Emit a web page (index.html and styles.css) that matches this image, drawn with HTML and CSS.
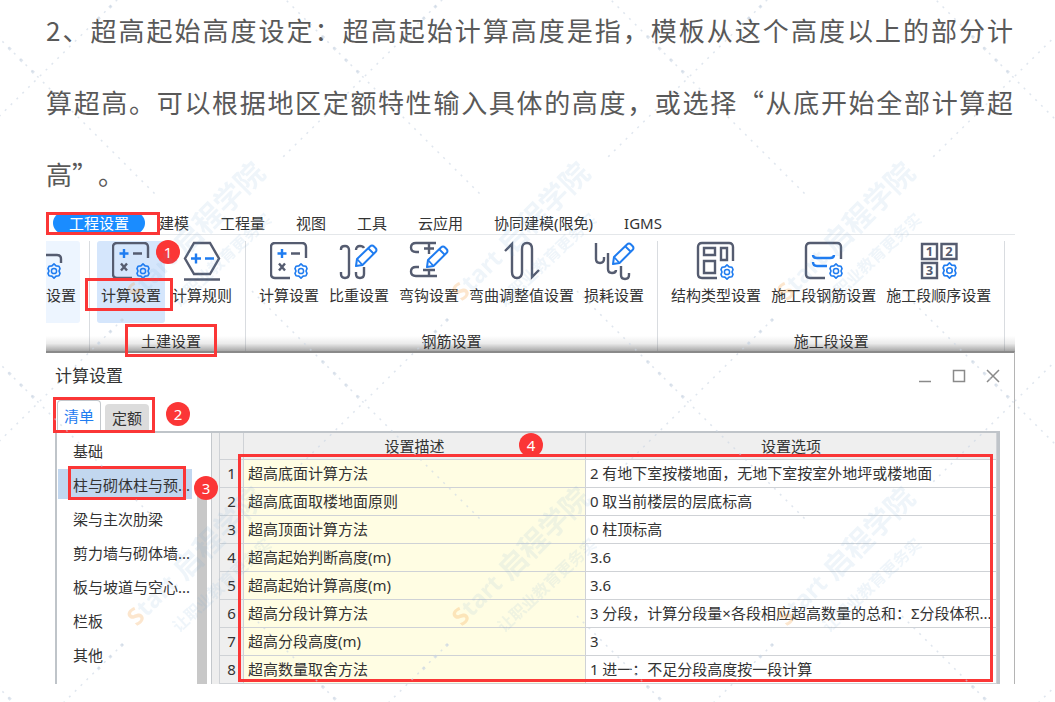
FILE: index.html
```html
<!DOCTYPE html>
<html lang="zh-CN">
<head>
<meta charset="utf-8">
<title>超高起始高度设定</title>
<link rel="stylesheet" href="styles.css">
</head>
<body>
<svg class="sprite" aria-hidden="true">
  <defs>
    <symbol id="gear" viewBox="0 0 16 16">
      <path d="M8 .9l2.1 2 2.9.3 1 2.4-1 2.4 1 2.4-1 2.4-2.9.3-2.1 2-2.1-2-2.9-.3-1-2.4 1-2.4-1-2.4 1-2.4 2.9-.3z" fill="none" stroke="#1f7cf0" stroke-width="1.6" stroke-linejoin="round"/>
      <circle cx="8" cy="8" r="2.6" fill="none" stroke="#1f7cf0" stroke-width="1.5"/>
    </symbol>
    <symbol id="pencil" viewBox="0 0 24 24">
      <path d="M2 22l1-7L16 2.500q2-2 4 0l1.500 1.500q2 2 0 4L8.500 21z" fill="#fff" stroke="#1f7cf0" stroke-width="2" stroke-linejoin="round"/>
      <path d="M14.500 4.500l5 5M3 15l5.500 6" fill="none" stroke="#1f7cf0" stroke-width="1.800"/>
    </symbol>
    <symbol id="calc" viewBox="0 0 38 38">
      <path class="ink" d="M36 16V5q0-4-4-4H5Q1 1 1 5v27q0 4 4 4h15"/>
      <path class="blue" d="M12 7v9M7.500 11.500h9"/>
      <path class="ink" d="M21 11.500h9M9 21.500l6 7M15 21.500l-6 7"/>
      <use href="#gear" x="23" y="21" width="16" height="16"/>
    </symbol>
  </defs>
</svg>

<main class="page">
  <p class="lead">
    <span class="line">2、超高起始高度设定：超高起始计算高度是指，模板从这个高度以上的部分计</span>
    <span class="line">算超高。可以根据地区定额特性输入具体的高度，或选择“从底开始全部计算超</span>
    <span class="line last">高”。</span>
  </p>

  <section class="shot">
    <nav class="menu">
      <a class="current" href="#">工程设置<span class="mark mark-menu"></span></a>
      <a href="#">建模</a>
      <a href="#">工程量</a>
      <a href="#">视图</a>
      <a href="#">工具</a>
      <a href="#">云应用</a>
      <a href="#">协同建模(限免)</a>
      <a href="#">IGMS</a>
    </nav>

    <div class="ribbon">
      <div class="cut">
        <button class="tool" type="button">
          <svg width="38" height="38" viewBox="0 0 38 38"><path class="ink" d="M0 13h11q4 0 4 4v4"/><use href="#gear" x="0" y="21" width="16" height="16"/></svg>
          设置
        </button>
      </div>

      <div class="group group-civil">
        <div class="tools">
          <button class="tool chosen" type="button">
            <svg width="38" height="38"><use href="#calc"/></svg>
            计算设置
            <span class="mark mark-tool"></span>
            <span class="badge badge-tool">1</span>
          </button>
          <button class="tool" type="button">
            <svg width="38" height="38" viewBox="0 0 38 38"><path class="ink" d="M11 1h16l9 15.500L27 32H11L2 16.500zM1 37.500h36"/><path class="blue" d="M13 11.500v10M8 16.500h10M22 16.500h9"/></svg>
            计算规则
          </button>
        </div>
        <div class="caption"><span class="caption-text">土建设置<span class="mark mark-caption"></span></span></div>
      </div>

      <div class="group">
        <div class="tools">
          <button class="tool" type="button">
            <svg width="38" height="38"><use href="#calc"/></svg>
            计算设置
          </button>
          <button class="tool" type="button">
            <svg width="38" height="38" viewBox="0 0 38 38"><path class="ink" d="M1 8V7q0-3 4-3t4 4v24q0 4-4 4t-4-4v-2M16 8q0-4 4-4 3 0 4 2M16 30v2q0 4 4 4t4-4V25"/><use href="#pencil" x="14" y="2" width="24" height="24"/></svg>
            比重设置
          </button>
          <button class="tool" type="button">
            <svg width="38" height="38" viewBox="0 0 38 38"><path class="ink" d="M26 1H6Q1 1 1 5.500T6 10h3M19 1v11M14 6.500h10M9 25H6q-5 0-5 4.500T6 34h21M13 28h12M19 28v6"/><use href="#pencil" x="15" y="3" width="24" height="24"/></svg>
            弯钩设置
          </button>
          <button class="tool" type="button">
            <svg width="38" height="38" viewBox="0 0 38 38"><path class="ink" d="M2 9l7-7v28q0 6 5 6t5-6V7q0-6 5-6t5 6v28l7-7"/></svg>
            弯曲调整值设置
          </button>
          <button class="tool" type="button">
            <svg width="40" height="38" viewBox="0 0 40 38"><path class="ink" d="M2 1v16q0 4 4 4t4-4v-2M14 11v16q0 4 4 4t4-3M27 24v9q0 4 4 4t4-4v-2"/><use href="#pencil" x="17" y="0" width="24" height="24"/></svg>
            损耗设置
          </button>
        </div>
        <div class="caption">钢筋设置</div>
      </div>

      <div class="group">
        <div class="tools">
          <button class="tool" type="button">
            <svg width="38" height="38" viewBox="0 0 38 38"><path class="ink" d="M36 19V5q0-4-4-4H5Q1 1 1 5v27q0 4 4 4h15"/><path class="ink" d="M7 6h11v7H7zM24 6h6v12h-6zM7 19h11v12H7z"/><use href="#gear" x="22" y="22" width="16" height="16"/></svg>
            结构类型设置
          </button>
          <button class="tool" type="button">
            <svg width="38" height="38" viewBox="0 0 38 38"><path class="ink" d="M36 17V5q0-4-4-4H5Q1 1 1 5v27q0 4 4 4h15"/><path class="blue" d="M8 13q0 3 4 3h13q4 0 4-3M8 20q0 4 4 4h10"/><use href="#gear" x="23" y="21" width="16" height="16"/></svg>
            施工段钢筋设置
          </button>
          <button class="tool" type="button">
            <svg width="38" height="38" viewBox="0 0 38 38"><path class="ink" d="M2 2h15v15H2zM21.500 2h15v15h-15zM2 21h15v15H2z"/><g class="digit"><text x="9.500" y="14">1</text><text x="29" y="14">2</text><text x="9.500" y="33">3</text></g><use href="#gear" x="21" y="20" width="17" height="17"/></svg>
            施工段顺序设置
          </button>
        </div>
        <div class="caption">施工段设置</div>
      </div>
    </div>

    <div class="dialog">
      <header class="titlebar">
        <h1 class="title">计算设置</h1>
        <div class="window-buttons">
          <button type="button" aria-label="最小化"><svg width="14" height="14" viewBox="0 0 14 14"><path d="M1 12.500h12"/></svg></button>
          <button type="button" aria-label="最大化"><svg width="14" height="14" viewBox="0 0 14 14"><path d="M1.500 1.500h11v11h-11z"/></svg></button>
          <button type="button" aria-label="关闭"><svg width="14" height="14" viewBox="0 0 14 14"><path d="M1 1l12 12M13 1L1 13"/></svg></button>
        </div>
      </header>

      <div class="tabs">
        <button class="tab open" type="button">清单</button>
        <button class="tab" type="button">定额</button>
        <span class="mark mark-tabs"></span>
        <span class="badge badge-tabs">2</span>
      </div>

      <div class="panel">
        <div class="side">
          <ul class="list">
            <li>基础</li>
            <li class="selected">柱与砌体柱与预...<span class="mark mark-item"></span><span class="badge badge-item">3</span></li>
            <li>梁与主次肋梁</li>
            <li>剪力墙与砌体墙...</li>
            <li>板与坡道与空心...</li>
            <li>栏板</li>
            <li>其他</li>
          </ul>
          <div class="scroll"></div>
        </div>
        <div class="grid">
          <table>
            <colgroup><col class="col-num"><col class="col-name"><col></colgroup>
            <thead>
              <tr><th></th><th>设置描述</th><th>设置选项</th></tr>
            </thead>
            <tbody>
              <tr><th>1</th><td>超高底面计算方法</td><td>2 有地下室按楼地面，无地下室按室外地坪或楼地面</td></tr>
              <tr><th>2</th><td>超高底面取楼地面原则</td><td>0 取当前楼层的层底标高</td></tr>
              <tr><th>3</th><td>超高顶面计算方法</td><td>0 柱顶标高</td></tr>
              <tr><th>4</th><td>超高起始判断高度(m)</td><td>3.6</td></tr>
              <tr><th>5</th><td>超高起始计算高度(m)</td><td>3.6</td></tr>
              <tr><th>6</th><td>超高分段计算方法</td><td>3 分段，计算分段量×各段相应超高数量的总和：Σ分段体积...</td></tr>
              <tr><th>7</th><td>超高分段高度(m)</td><td>3</td></tr>
              <tr><th>8</th><td>超高数量取舍方法</td><td>1 进一：不足分段高度按一段计算</td></tr>
            </tbody>
          </table>
          <span class="badge badge-grid">4</span>
          <span class="mark mark-grid"></span>
        </div>
      </div>
    </div>
  </section>

  <svg class="watermark" aria-hidden="true">
    <defs>
      <pattern id="dots" x="527" y="566" width="325" height="325" patternUnits="userSpaceOnUse">
        <g fill="none" stroke="#c9d5e2" stroke-opacity=".6">
          <path d="M50 50L280 280M246 78L80 242" stroke-width="1.500" stroke-dasharray="2 6.200"/>
          <path d="M120 120l42 42M246 78l-34 34" stroke-width="3" stroke-dasharray="3 13.400"/>
        </g>
      </pattern>
      <pattern id="brand" x="440" y="475" width="325" height="325" patternUnits="userSpaceOnUse">
        <g transform="translate(22 152) rotate(-45)" fill="#5f9bd0" fill-opacity=".1">
          <text class="wm-latin" x="0" y="0"><tspan fill="#f59a3c" fill-opacity=".25">S</tspan>tart</text>
          <text class="wm-name" x="66" y="2">启程学院</text>
        </g>
        <text class="wm-motto" transform="translate(64 158) rotate(-43)" fill="#5f9bd0" fill-opacity=".1">让职业教育更务实</text>
      </pattern>
    </defs>
    <rect width="100%" height="100%" fill="url(#dots)"/>
    <rect width="100%" height="100%" fill="url(#brand)"/>
  </svg>
</main>
</body>
</html>
```

FILE: styles.css
```css
* {
  box-sizing: border-box;
}

body {
  margin: 0;
  background: #fff;
  color: #333;
  font: 15px/20px "Noto Sans", "Noto Sans CJK SC", sans-serif;
}

button {
  border: 0;
  padding: 0;
  background: none;
  color: inherit;
  font: inherit;
}

a {
  color: inherit;
  text-decoration: none;
}

.sprite {
  position: absolute;
  width: 0;
  height: 0;
}

.page {
  position: relative;
  display: flow-root;
  min-height: 100vh;
  padding: 0 40px 0 46px;
  overflow: hidden;
}

/* Article text */
.lead {
  margin: -6px 2px 2px 0;
  color: #595959;
  font-family: "Noto Sans CJK SC", sans-serif;
  font-size: 26px;
  line-height: 72px;
  text-spacing-trim: space-all;
}

.line {
  display: block;
  text-align: justify;
  text-align-last: justify;
  white-space: nowrap;
}

.last {
  text-align-last: left;
}

/* Menu */
.menu {
  display: flex;
  gap: 31px;
  height: 23px;
  padding-left: 7px;
  border-bottom: 1px solid #e4e7ea;
  line-height: 22px;
  white-space: nowrap;
}

.current {
  position: relative;
  margin-right: -17px;
  padding: 0 16px;
  border-radius: 11px;
  background: #1a8cff;
  color: #fff;
}

/* Ribbon */
.ribbon {
  position: relative;
  display: flex;
  padding-top: 6px;
  white-space: nowrap;
}

.ribbon::before {
  content: "";
  position: absolute;
  inset: auto 0 0;
  height: 15px;
  background: linear-gradient(rgba(120, 120, 120, 0), rgba(120, 120, 120, .15) 50%, rgba(110, 110, 110, .6));
}

.ink,
.blue {
  fill: none;
  stroke: #555c70;
  stroke-width: 2.4;
}

.blue {
  stroke: #1f7cf0;
}

.digit {
  fill: #555c70;
  font: bold 13px "Noto Sans", sans-serif;
  text-anchor: middle;
}

.cut {
  display: flex;
  width: 34px;
  height: 82px;
  margin-right: 9px;
  background: #edf5ff;
  border-radius: 0 3px 3px 0;
}

.group {
  padding: 0 13px;
  border-left: 1px solid #d9dce0;
}

.group:last-child {
  border-right: 1px solid #d9dce0;
}

.group-civil {
  padding: 0 0 0 7px;
}

.tools {
  display: flex;
  gap: 10px;
}

.group-civil .tools {
  gap: 7px;
  padding-right: 13px;
}

.tool {
  position: relative;
  display: flex;
  flex-direction: column;
  align-items: center;
  gap: 5px;
  height: 82px;
  padding-top: 1px;
}

.cut .tool {
  align-items: flex-start;
}

.tool svg {
  overflow: visible;
}

.chosen {
  padding: 1px 4px 0;
  border-radius: 3px;
  background: #d5e6fc;
}

.caption {
  position: relative;
  margin-top: 8px;
  text-align: center;
}

.caption-text {
  position: relative;
}

/* Dialog */
.dialog {
  border-top: 2px solid #8a8a8a;
  border-right: 1px solid #b4b4b4;
  padding: 0 14px 0 9px;
}

.titlebar {
  display: flex;
  align-items: center;
  justify-content: space-between;
  height: 44px;
  padding-top: 1px;
}

.title {
  margin: 0;
  font-size: 17px;
  font-weight: 400;
}

.window-buttons {
  display: flex;
  gap: 20px;
}

.window-buttons button {
  display: flex;
}

.window-buttons path {
  fill: none;
  stroke: #8a8a8a;
  stroke-width: 1.5;
}

.tabs {
  position: relative;
  display: flex;
  align-items: flex-end;
  gap: 4px;
  width: max-content;
  height: 34px;
  padding-left: 2px;
}

.tab {
  height: 27px;
  padding: 0 7px;
  border-radius: 4px 4px 0 0;
  background: #dcdcdc;
}

.open {
  height: 31px;
  padding: 0 6px;
  border: 1px solid #c4c8cc;
  border-bottom: 0;
  background: #fff;
  color: #1f7cf0;
}

.panel {
  display: flex;
  border: solid #bfc4c9;
  border-width: 2px 3px 0 2px;
  background: #eee;
}

.side {
  display: flex;
  width: 155px;
  flex: none;
  border-right: 1px solid #c4c8cc;
  background: #fff;
}

.list {
  flex: 1;
  margin: 0;
  padding: 2px 5px 0 1px;
  list-style: none;
  white-space: nowrap;
}

.list li {
  position: relative;
  height: 30px;
  margin-bottom: 4px;
  padding-left: 15px;
  line-height: 32px;
}

.list .selected {
  background: #c2d7ef;
}

.scroll {
  width: 10px;
  margin: 56px 4px 0 0;
  background: #c8c8c8;
}

.grid {
  position: relative;
  flex: 1;
  min-width: 0;
  margin-left: 7px;
}

.grid table {
  width: 100%;
  border-collapse: collapse;
  table-layout: fixed;
  background: #fff;
}

.col-num {
  width: 24px;
}

.col-name {
  width: 44%;
}

.grid th,
.grid td {
  height: 28px;
  padding: 0 0 0 4px;
  border: 1px solid #cfd2d6;
  overflow: hidden;
  font-weight: 400;
  white-space: nowrap;
}

.grid th {
  padding: 0;
  background: #efefef;
  text-align: center;
}

.grid thead th {
  height: 26px;
  border-top: 0;
}

.grid td {
  text-align: left;
}

.grid td:nth-child(2) {
  background: #fffde3;
}

/* Callouts */
.mark {
  position: absolute;
  z-index: 2;
  border: 3px solid #fb3636;
}

.badge {
  position: absolute;
  z-index: 2;
  width: 24px;
  height: 24px;
  border-radius: 50%;
  background: #fb3636;
  color: #fff;
  line-height: 24px;
  text-align: center;
}

.mark-menu {
  inset: 0 -15px -1px -7px;
}

.mark-tool {
  inset: 37px -8px 12px -12px;
}

.badge-tool {
  top: -1px;
  right: -15px;
}

.mark-caption {
  inset: -7px -16px -6px;
}

.mark-tabs {
  inset: 0 -6px -2px -2px;
}

.badge-tabs {
  top: 5px;
  right: -41px;
}

.mark-item {
  inset: -3px 6px -1px 10px;
}

.badge-item {
  top: 7px;
  right: -26px;
}

.badge-grid {
  top: 0;
  left: 300px;
}

.mark-grid {
  inset: 21px 4px 2px 19px;
}

/* Watermark */
.watermark {
  position: absolute;
  inset: 0;
  z-index: 3;
  width: 100%;
  height: 100%;
  pointer-events: none;
}

.wm-latin {
  font: bold 24px "Noto Sans", sans-serif;
}

.wm-name {
  font: bold 29px "Noto Sans CJK SC", sans-serif;
}

.wm-motto {
  font: bold 16px "Noto Sans CJK SC", sans-serif;
}
```
